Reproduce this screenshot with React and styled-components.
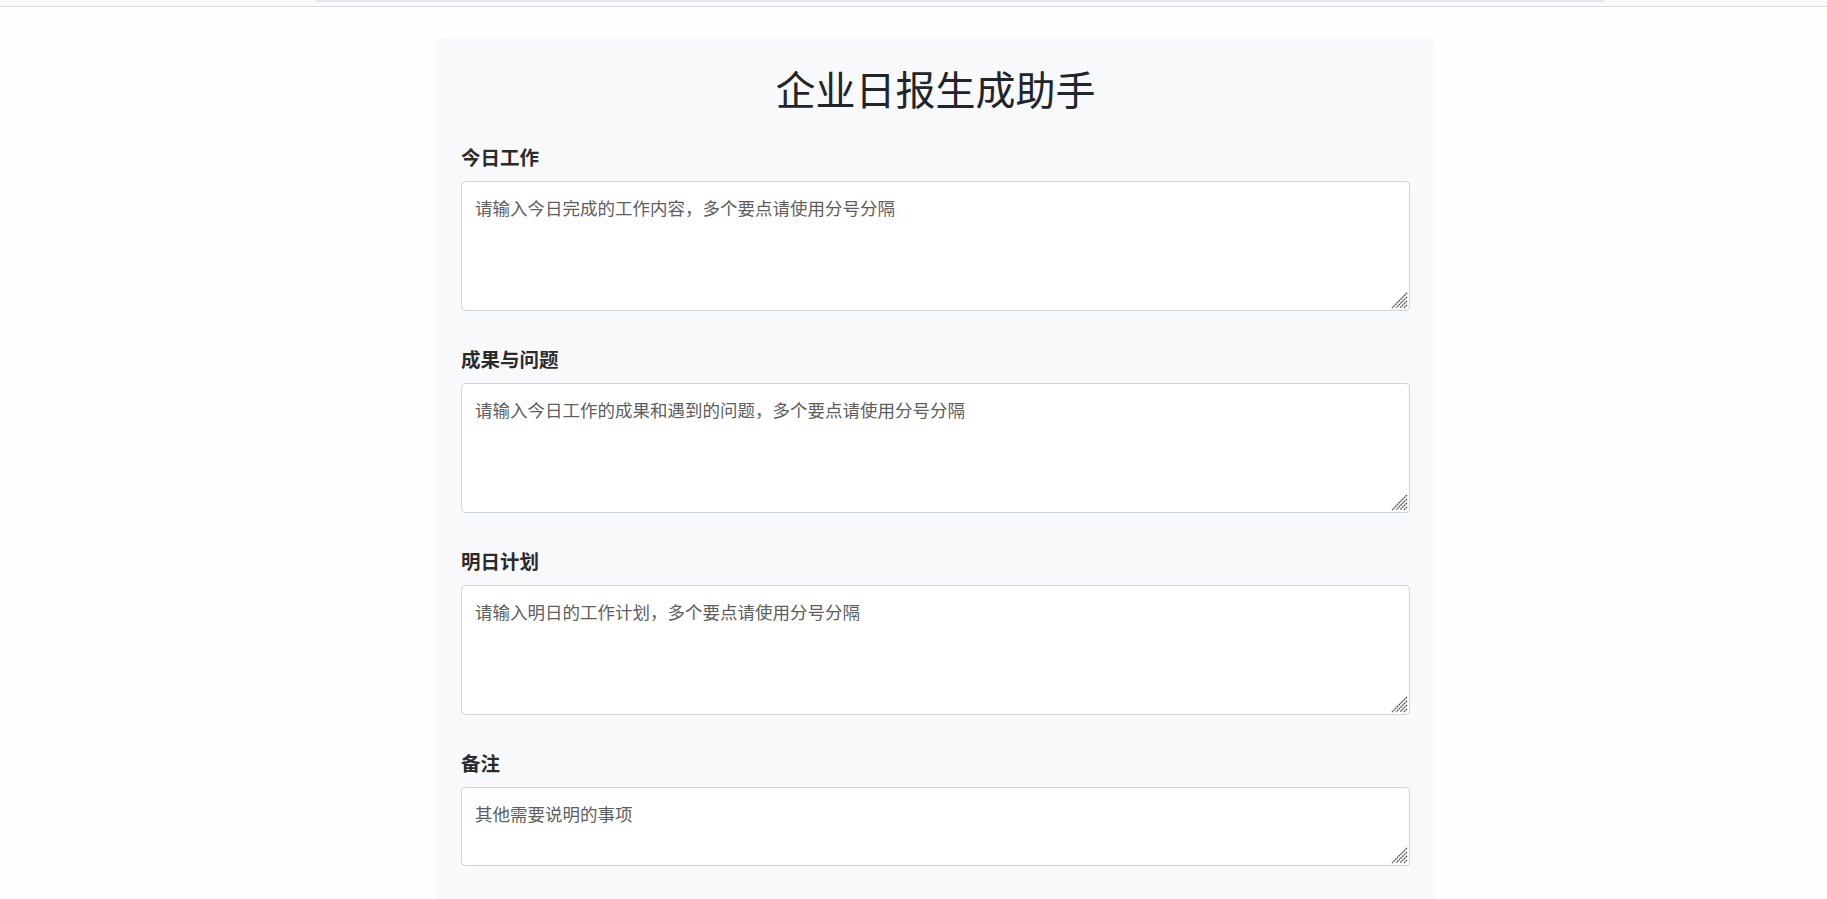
import React from 'react';
import styled, { createGlobalStyle } from 'styled-components';

const GlobalStyle = createGlobalStyle`
  html, body {
    margin: 0;
    padding: 0;
    background: #fefefe;
    overflow: hidden;
  }
  body {
    font-family: "Noto Sans CJK SC", "Noto Sans", "Liberation Sans", sans-serif;
    color: #212529;
  }
  * {
    box-sizing: border-box;
  }
`;

const fields = [
  { id: 'today', label: '今日工作', placeholder: '请输入今日完成的工作内容，多个要点请使用分号分隔', height: 130 },
  { id: 'result', label: '成果与问题', placeholder: '请输入今日工作的成果和遇到的问题，多个要点请使用分号分隔', height: 130 },
  { id: 'plan', label: '明日计划', placeholder: '请输入明日的工作计划，多个要点请使用分号分隔', height: 130 },
  { id: 'note', label: '备注', placeholder: '其他需要说明的事项', height: 79 },
];

// hatched resize handle, as the browser draws it in the reference
const Grip = () => (
  <GripIcon width="17" height="17" viewBox="0 0 17 17">
    <g stroke="#555" strokeWidth="1.4" strokeDasharray="1.8 0.7">
      <line x1="16" y1="1" x2="1" y2="16" />
      <line x1="16" y1="5" x2="5" y2="16" />
      <line x1="16" y1="9" x2="9" y2="16" />
      <line x1="16" y1="13" x2="13" y2="16" />
    </g>
  </GripIcon>
);

export default function App() {
  return (
    <>
      <GlobalStyle />
      <Page>
        <ScrollStrip>
          <Thumb />
        </ScrollStrip>
        <Content>
          <Card>
            <Title>企业日报生成助手</Title>
            {fields.map((f) => (
              <Group key={f.id}>
                <Label htmlFor={f.id}>{f.label}</Label>
                <Field>
                  <TextArea id={f.id} placeholder={f.placeholder} $h={f.height} />
                  <Grip />
                </Field>
              </Group>
            ))}
          </Card>
        </Content>
      </Page>
    </>
  );
}

const Page = styled.div`
  height: 100vh;
  overflow: hidden;
  display: flex;
  flex-direction: column;
`;

const ScrollStrip = styled.div`
  height: 7px;
  flex-shrink: 0;
  background: #f8f8fa;
  border-bottom: 1px solid #dcdcdc;
  padding-left: 315px;
`;

const Thumb = styled.div`
  width: 1290px;
  height: 2px;
  background: #e6e6ec;
  border-radius: 0 0 2px 2px;
`;

const Content = styled.div`
  padding: 30px 0 0 436px;
`;

const Card = styled.div`
  width: 999px;
  background: #f8f9fa;
  border-radius: 9px;
  padding: 27px 25px 60px 25px;
`;

const Title = styled.h1`
  margin: 0 0 30px;
  text-align: center;
  font-size: 40px;
  line-height: 48px;
  font-weight: 400;
  color: #212529;
`;

const Group = styled.div`
  display: flex;
  flex-direction: column;
  margin-bottom: 33px;
`;

const Label = styled.label`
  font-size: 19.5px;
  line-height: 30px;
  font-weight: 700;
  color: #2b2b2b;
  margin-bottom: 9px;
`;

const Field = styled.div`
  position: relative;
  display: flex;
`;

const TextArea = styled.textarea`
  width: 949px;
  height: ${(p) => p.$h}px;
  padding: 13px 12px 13px 13px;
  border: 1px solid #ced4da;
  border-radius: 4px;
  background: #fff;
  font-family: "Noto Sans CJK SC", "Noto Sans", sans-serif;
  font-size: 17.5px;
  line-height: 26px;
  color: #333;
  resize: none;
  outline: none;

  &::placeholder {
    color: #5e5e5e;
  }
`;

const GripIcon = styled.svg`
  position: absolute;
  right: 2px;
  bottom: 2px;
  pointer-events: none;
`;
